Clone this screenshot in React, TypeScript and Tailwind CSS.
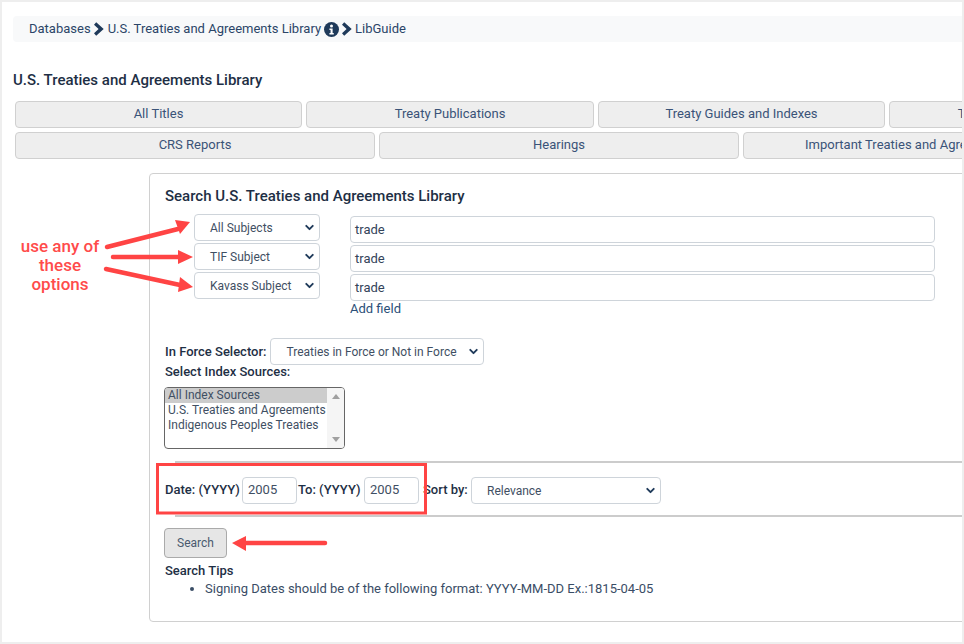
import { ChevronDown } from 'lucide-react';

const ROW_ONE = [
  { label: 'All Titles', width: 'w-[287px]' },
  { label: 'Treaty Publications', width: 'w-[288px]' },
  { label: 'Treaty Guides and Indexes', width: 'w-[287px]' },
  { label: 'Treaty Research Materials', width: 'w-[288px]' },
];
const ROW_TWO = [
  { label: 'CRS Reports', width: 'w-[360px]' },
  { label: 'Hearings', width: 'w-[360px]' },
  { label: 'Important Treaties and Agreements Lists', width: 'w-[360px]' },
];
const SUBJECTS = ['All Subjects', 'TIF Subject', 'Kavass Subject'];

function Chevron({ className }: { className: string }) {
  return (
    <svg viewBox="0 0 10 14" className={`h-[14px] w-[10px] fill-[#1f3a5a] ${className}`}>
      <path d="M2.2 0.3 L9.7 7 L2.2 13.7 L0 11.2 L4.6 7 L0 2.8 Z" />
    </svg>
  );
}

function InfoIcon() {
  return (
    <svg viewBox="0 0 16 16" className="ml-[3px] mr-[3px] h-[15px] w-[15px]">
      <circle cx="8" cy="8" r="8" fill="#1f3a5a" />
      <circle cx="8" cy="4.2" r="1.6" fill="#fff" />
      <path d="M5.8 6.8h3.4v5h1.2v1.6H5.8v-1.6h1.2v-3.4H5.8z" fill="#fff" />
    </svg>
  );
}

function Select({ label, className }: { label: string; className: string }) {
  return (
    <div className={`relative flex h-[27px] items-center rounded border border-[#ced4da] bg-white text-[12px] font-normal text-[#3f4f63] ${className}`}>
      <span className="whitespace-nowrap pl-[15px]">{label}</span>
      <ChevronDown size={13} strokeWidth={3.5} className="absolute right-[3px] top-[6px] text-[#1f3a5a]" />
    </div>
  );
}

function TabRow({ tabs, className }: { tabs: { label: string; width: string }[]; className: string }) {
  return (
    <div className={`flex gap-1 pl-[13px] ${className}`}>
      {tabs.map((t) => (
        <div
          key={t.label}
          className={`flex h-[27px] shrink-0 items-center justify-center whitespace-nowrap rounded border border-[#d0d0d0] bg-[#eeeeee] pb-[2px] text-[13px] text-[#3a5378] ${t.width}`}
        >
          {t.label}
        </div>
      ))}
    </div>
  );
}

function YearBox() {
  return (
    <div className="flex h-[27px] w-[55px] shrink-0 items-center rounded border border-[#ced4da] px-[5px] text-[13px] font-normal text-[#3f4f63]">
      2005
    </div>
  );
}

export default function App() {
  return (
    <div className="relative h-[644px] w-[964px] overflow-hidden border-2 border-[#eeeeee] bg-white font-['Roboto',sans-serif] text-[#1f3a5a]">
      <div className="ml-[11px] mt-[14px] flex h-[26px] w-[951px] items-center rounded-l bg-[#f8f9fa] pl-[16px] text-[13px] text-[#2b4568]">
        <span>Databases</span>
        <Chevron className="ml-[3px] mr-[4px]" />
        <span>U.S. Treaties and Agreements Library</span>
        <InfoIcon />
        <Chevron className="mr-[3px]" />
        <span>LibGuide</span>
      </div>

      <h1 className="ml-[11px] mt-[29px] text-[15px] font-medium leading-[18px] text-[#1e2f45]">
        U.S. Treaties and Agreements Library
      </h1>

      <TabRow tabs={ROW_ONE} className="mt-[12px]" />
      <TabRow tabs={ROW_TWO} className="mt-[4px]" />

      <div className="ml-[147px] mt-[14px] h-[449px] w-[830px] rounded border border-[#d0d0d0] pl-[14px] pt-[13px] text-[13px]">
        <h2 className="pl-[1px] text-[15px] font-medium leading-[18px] text-[#1e2f45]">
          Search U.S. Treaties and Agreements Library
        </h2>

        <div className="mt-[9px] flex">
          <div className="flex w-[186px] flex-col gap-[2px]">
            {SUBJECTS.map((s) => (
              <Select key={s} label={s} className="ml-[30px] w-[126px]" />
            ))}
          </div>
          <div className="mt-[2px] w-[585px]">
            <div className="flex flex-col gap-[2px]">
              {[0, 1, 2].map((i) => (
                <div key={i} className="flex h-[27px] items-center rounded border border-[#ced4da] px-[4px] text-[13px] text-[#33435a]">
                  trade
                </div>
              ))}
            </div>
            <div className="text-[13px] leading-[15px] text-[#2b4f78]">Add field</div>
          </div>
        </div>

        <div className="ml-[1px] mt-[22px] flex items-center gap-[4px]">
          <span className="font-medium text-[#1e2f45]">In Force Selector:</span>
          <Select label="Treaties in Force or Not in Force" className="w-[214px]" />
        </div>
        <div className="ml-[1px] font-medium leading-[14px] text-[#1e2f45]">Select Index Sources:</div>

        <div className="mt-[8px] flex h-[62px] w-[181px] overflow-hidden rounded-sm border border-[#666666] text-[12px] leading-[15px] text-[#3f4f63]">
          <div className="w-[162px] whitespace-nowrap">
            <div className="bg-[#cccccc] pl-[3px]">All Index Sources</div>
            <div className="pl-[3px]">U.S. Treaties and Agreements</div>
            <div className="pl-[3px]">Indigenous Peoples Treaties</div>
          </div>
          <div className="relative flex-1 bg-[#f5f5f5]">
            <div className="absolute left-[5px] top-[6px] border-x-[4px] border-b-[5px] border-x-transparent border-b-[#a0a0a0]" />
            <div className="absolute bottom-[6px] left-[5px] border-x-[4px] border-t-[5px] border-x-transparent border-t-[#a0a0a0]" />
          </div>
        </div>

        <div className="ml-[11px] mt-[12px] h-[2px] bg-[#cccccc]" />
        <div className="flex h-[52px] items-center pl-[1px] pt-[2px] font-medium text-[#1e2f45]">
          <span className="w-[77px] shrink-0 whitespace-nowrap">Date: (YYYY)</span>
          <YearBox />
          <span className="ml-[1px] w-[66px] shrink-0 whitespace-nowrap">To: (YYYY)</span>
          <YearBox />
          <span className="ml-[4px] w-[48px] shrink-0 whitespace-nowrap">Sort by:</span>
          <Select label="Relevance" className="mt-[1px] w-[190px]" />
        </div>
        <div className="ml-[11px] h-[2px] bg-[#cccccc]" />

        <div className="mt-[11px] flex h-[30px] w-[63px] items-center justify-center rounded border border-[#aaaaaa] bg-[#e6e6e6] text-[12px] text-[#4a5a6e]">
          Search
        </div>
        <div className="ml-[1px] mt-[6px] font-medium leading-[14px] text-[#1e2f45]">Search Tips</div>
        <ul className="mt-[2px] list-disc pl-[41px] leading-[17px] text-[#3a4d66]">
          <li>Signing Dates should be of the following format: YYYY-MM-DD Ex.:1815-04-05</li>
        </ul>
      </div>

      {/* annotations laid over the page */}
      <div className="absolute left-[13px] top-[235px] w-[90px] text-center text-[17px] font-medium leading-[19px] text-[#ff4b4b]">
        use any of these options
      </div>
      <svg className="absolute left-[-2px] top-[-2px] h-[644px] w-[964px]" viewBox="0 0 964 644" fill="none">
        <g stroke="#ff4444" strokeWidth="4.5" strokeLinecap="round">
          <path d="M107 247 L178 229" />
          <path d="M113 257 L180 257" />
          <path d="M106 269 L180 285" />
          <path d="M240 543 L325 543" />
        </g>
        <g fill="#ff4444">
          <path d="M190 222 L175 220 L180 234 Z" />
          <path d="M193 257 L178 250 L178 264 Z" />
          <path d="M193 287 L180 277 L178 292 Z" />
          <path d="M232 543 L246 536 L246 551 Z" />
        </g>
        <rect x="157.5" y="464.5" width="268" height="48.5" stroke="#ff4444" strokeWidth="3" />
      </svg>
    </div>
  );
}
